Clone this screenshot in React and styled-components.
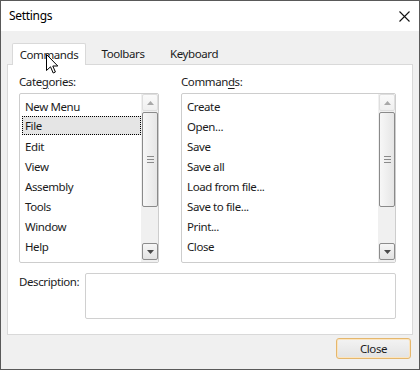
import React from 'react';
import styled, { createGlobalStyle } from 'styled-components';

const GlobalStyle = createGlobalStyle`
  html, body {
    margin: 0;
    padding: 0;
    background: #ffffff;
  }
  * {
    box-sizing: border-box;
  }
`;

const Window = styled.div`
  position: relative;
  width: 420px;
  height: 370px;
  border: 1px solid #595959;
  display: flex;
  flex-direction: column;
  font-family: "Segoe UI", "Noto Sans", sans-serif;
  font-size: 11.5px;
  letter-spacing: -0.4px;
  color: #1b1b1b;
  background: #f0f0f0;
`;

const TitleBar = styled.div`
  height: 30px;
  flex: none;
  display: flex;
  align-items: center;
  justify-content: space-between;
  padding: 0 9px 0 8px;
  background: #ffffff;
  color: #000;
`;

const Title = styled.span`
  font-size: 12px;
  letter-spacing: -0.3px;
  margin-top: -1px;
`;

const Body = styled.div`
  flex: 1;
  display: flex;
  flex-direction: column;
  padding: 11px 6px 0 6px;
`;

const TabRow = styled.div`
  display: flex;
  align-items: flex-end;
  padding-left: 5px;
  height: 22px;
  position: relative;
  z-index: 1;
`;

const Tab = styled.div`
  width: ${p => p.$w}px;
  height: ${p => (p.$active ? 22 : 20)}px;
  display: flex;
  align-items: center;
  justify-content: center;
  margin-bottom: ${p => (p.$active ? -1 : 0)}px;
  background: ${p => (p.$active ? '#ffffff' : 'transparent')};
  border: ${p => (p.$active ? '1px solid #d9d9d9' : 'none')};
  border-bottom: none;
  border-radius: 2px 2px 0 0;
  padding-bottom: 1px;
`;

const Panel = styled.div`
  height: 271px;
  background: #ffffff;
  border: 1px solid #d9d9d9;
  padding: 8px 16px 14px 11px;
  display: flex;
  flex-direction: column;
`;

const Columns = styled.div`
  display: grid;
  grid-template-columns: 140px 215px;
  column-gap: 22px;
`;

const Column = styled.div`
  display: flex;
  flex-direction: column;
`;

const Label = styled.div`
  height: 17px;
  line-height: 17px;
  margin-bottom: 3px;
`;

const Key = styled.span`
  text-decoration: underline;
  text-underline-offset: 2px;
`;

const ListBox = styled.div`
  height: 170px;
  border: 1px solid #cdcdcd;
  border-radius: 2px;
  display: flex;
  overflow: hidden;
`;

const Items = styled.div`
  flex: 1;
  padding-top: 2px;
  overflow: hidden;
`;

const Item = styled.div`
  height: ${p => (p.$selected ? 19 : 20)}px;
  margin: 0 0 ${p => (p.$selected ? 1 : 0)}px 2px;
  padding-left: 3px;
  display: flex;
  align-items: center;
  white-space: nowrap;
  background: ${p => (p.$selected ? '#e5e5e5' : 'transparent')};
  outline: ${p => (p.$selected ? '1px dotted #000' : 'none')};
  outline-offset: -1px;
`;

const ScrollBar = styled.div`
  width: 17px;
  flex: none;
  display: flex;
  flex-direction: column;
  background: #f0f0f0;
  padding: 0 0 2px 0;
`;

const ScrollButton = styled.div`
  height: 17px;
  flex: none;
  margin: 0 0 0 1px;
  display: flex;
  align-items: center;
  justify-content: center;
  border: 1px solid ${p => (p.$hot ? '#8c8c8c' : '#dedede')};
  border-radius: 2px;
  background: ${p => (p.$hot ? 'linear-gradient(#f6f6f6, #e2e2e2)' : 'linear-gradient(#fafafa, #efefef)')};
`;

const Thumb = styled.div`
  height: 95px;
  flex: none;
  margin: 1px 0 0 1px;
  border: 1px solid #8a8a8a;
  border-radius: 2px;
  background: linear-gradient(90deg, #f7f7f7, #e6e6e6);
  display: flex;
  align-items: center;
  justify-content: center;
`;

const Track = styled.div`
  flex: 1;
`;

const DescRow = styled.div`
  display: flex;
  margin-top: 10px;
`;

const DescLabel = styled.div`
  width: 66px;
  line-height: 16px;
  padding-top: 1px;
`;

const DescBox = styled.div`
  width: 312px;
  height: 46px;
  border: 1px solid #d0d0d0;
  border-radius: 2px;
`;

const Footer = styled.div`
  display: flex;
  justify-content: flex-end;
  padding: 3px 2px 0 0;
`;

const Button = styled.div`
  width: 75px;
  height: 21px;
  display: flex;
  align-items: center;
  justify-content: center;
  border: 1px solid #e5b76d;
  border-radius: 3px;
  box-shadow: inset 0 0 0 1px #fbe5c0;
  background: linear-gradient(#f3f3f3, #e3e3e3);
`;

const Cursor = styled.svg`
  position: absolute;
  left: 45px;
  top: 53px;
  z-index: 5;
`;

const Arrow = ({ down, dark }) => (
  <svg width="7" height="4" viewBox="0 0 7 4">
    <path d={down ? 'M0 0 H7 L3.5 4 Z' : 'M0 4 H7 L3.5 0 Z'} fill={dark ? '#4a4a4a' : '#a8a8a8'} />
  </svg>
);

const Grip = () => (
  <svg width="7" height="8" viewBox="0 0 7 8">
    <path d="M0 0.5 H7 M0 3.5 H7 M0 6.5 H7" stroke="#8a8a8a" strokeWidth="1" />
  </svg>
);

function List({ items, selected }) {
  return (
    <ListBox>
      <Items>
        {items.map((t, i) => (
          <Item key={t} $selected={i === selected}>{t}</Item>
        ))}
      </Items>
      <ScrollBar>
        <ScrollButton><Arrow /></ScrollButton>
        <Thumb><Grip /></Thumb>
        <Track />
        <ScrollButton $hot><Arrow down dark /></ScrollButton>
      </ScrollBar>
    </ListBox>
  );
}

const categories = ['New Menu', 'File', 'Edit', 'View', 'Assembly', 'Tools', 'Window', 'Help'];
const commands = ['Create', 'Open...', 'Save', 'Save all', 'Load from file...', 'Save to file...', 'Print...', 'Close'];

export default function App() {
  return (
    <>
      <GlobalStyle />
      <Window>
        <TitleBar>
          <Title>Settings</Title>
          <svg width="11" height="11" viewBox="0 0 11 11">
            <path d="M0.5 0.5 L10.5 10.5 M10.5 0.5 L0.5 10.5" stroke="#111" strokeWidth="1.1" />
          </svg>
        </TitleBar>
        <Body>
          <TabRow>
            <Tab $active $w={74}>Commands</Tab>
            <Tab $w={74}>Toolbars</Tab>
            <Tab $w={68}>Keyboard</Tab>
          </TabRow>
          <Panel>
            <Columns>
              <Column>
                <Label>Cate<Key>g</Key>ories:</Label>
                <List items={categories} selected={1} />
              </Column>
              <Column>
                <Label>Comman<Key>d</Key>s:</Label>
                <List items={commands} selected={-1} />
              </Column>
            </Columns>
            <DescRow>
              <DescLabel>Description:</DescLabel>
              <DescBox />
            </DescRow>
          </Panel>
          <Footer>
            <Button>Close</Button>
          </Footer>
        </Body>
        <Cursor width="13" height="20" viewBox="0 0 13 20">
          <path d="M0.5 0.5 V16.5 L4.5 12.8 L7.2 19 L9.4 18 L6.8 12 H11.8 Z" fill="#fff" stroke="#000" strokeWidth="1" strokeLinejoin="miter" />
        </Cursor>
      </Window>
    </>
  );
}
